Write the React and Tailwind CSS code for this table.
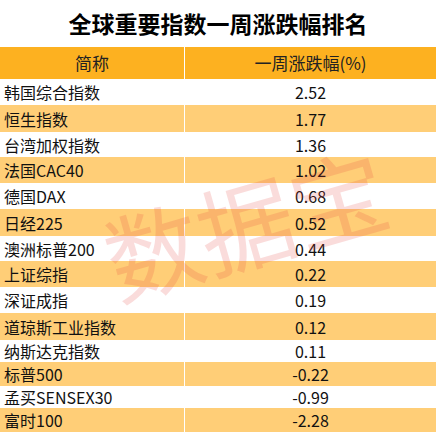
const rows = [
  ["韩国综合指数", "2.52", "h-[26px]"],
  ["恒生指数", "1.77", "h-[27px]"],
  ["台湾加权指数", "1.36", "h-[25px]"],
  ["法国CAC40", "1.02", "h-[26px]"],
  ["德国DAX", "0.68", "h-[26px]"],
  ["日经225", "0.52", "h-[27px]"],
  ["澳洲标普200", "0.44", "h-[25px]"],
  ["上证综指", "0.22", "h-[26px]"],
  ["深证成指", "0.19", "h-[26px]"],
  ["道琼斯工业指数", "0.12", "h-[27px]"],
  ["纳斯达克指数", "0.11", "h-[22px]"],
  ["标普500", "-0.22", "h-[24px]"],
  ["孟买SENSEX30", "-0.99", "h-[22px]"],
  ["富时100", "-2.28", "h-[24px]"],
];

const App = () => {
  return (
    <div
      className="relative w-[436px] h-[432px] overflow-hidden bg-white text-[#111]"
      style={{ fontFamily: '"Noto Sans CJK SC", "Noto Sans", sans-serif' }}
    >
      <div className="h-[47px] flex items-center justify-center text-[23px] font-bold text-black">
        全球重要指数一周涨跌幅排名
      </div>

      <div className="flex h-[32px] bg-[#fdb120] text-[17px] text-[#222]">
        <div className="w-[185px] flex items-center justify-center border-r border-white">
          简称
        </div>
        <div className="flex-1 flex items-center justify-center">
          一周涨跌幅(%)
        </div>
      </div>

      {rows.map(([name, value, h], i) => (
        <div
          key={name}
          className={`flex ${h} text-[16px] leading-none ${
            i % 2 === 1 ? "bg-[#ffce77]" : "bg-white"
          }`}
        >
          <div className="w-[185px] flex items-center pl-[4px] border-r border-white">
            {name}
          </div>
          <div className="flex-1 flex items-center justify-center">{value}</div>
        </div>
      ))}

      {/* watermark */}
      <div className="absolute left-[95px] top-[174px] w-[300px] h-[96px] -rotate-[16deg] flex items-center justify-center text-[96px] leading-none text-[#e8413c] opacity-[0.18] pointer-events-none select-none">
        数据宝
      </div>
    </div>
  );
};

export default App;
